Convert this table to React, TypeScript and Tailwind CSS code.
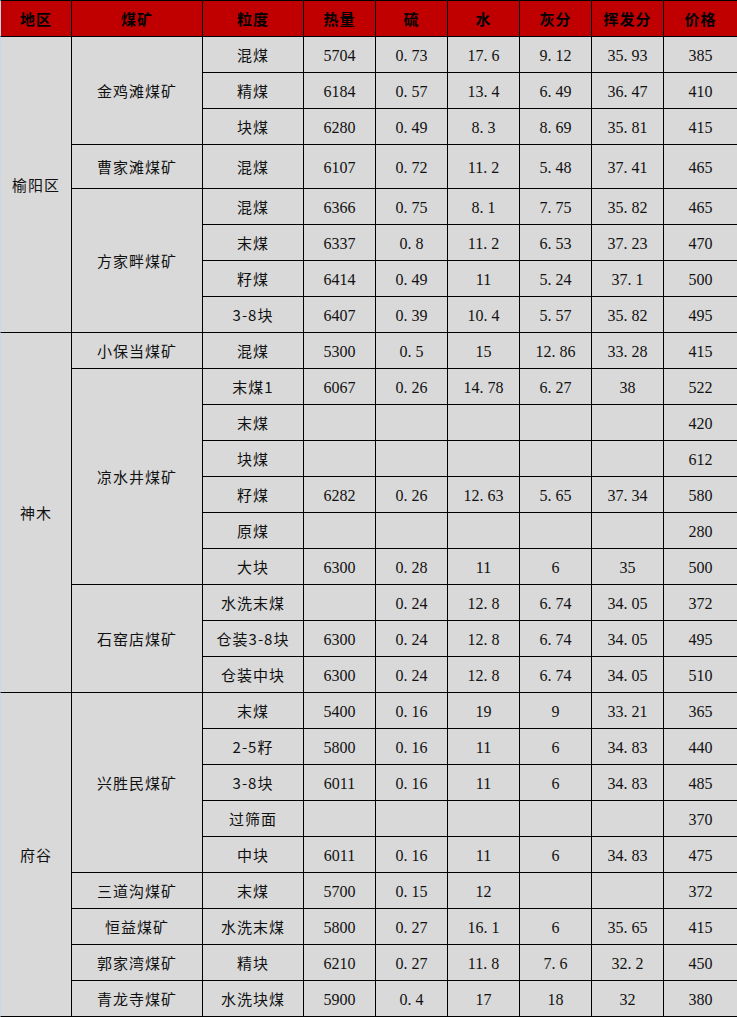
import React from 'react';

type Row = {
  size: string;
  heat?: string;
  s?: string;
  water?: string;
  ash?: string;
  vol?: string;
  price: string;
};

type Mine = { name: string; tall?: boolean; rows: Row[] };
type Region = { name: string; mines: Mine[] };

const DATA: Region[] = [
  {
    name: '榆阳区',
    mines: [
      {
        name: '金鸡滩煤矿',
        rows: [
          { size: '混煤', heat: '5704', s: '0.73', water: '17.6', ash: '9.12', vol: '35.93', price: '385' },
          { size: '精煤', heat: '6184', s: '0.57', water: '13.4', ash: '6.49', vol: '36.47', price: '410' },
          { size: '块煤', heat: '6280', s: '0.49', water: '8.3', ash: '8.69', vol: '35.81', price: '415' },
        ],
      },
      {
        name: '曹家滩煤矿',
        tall: true,
        rows: [{ size: '混煤', heat: '6107', s: '0.72', water: '11.2', ash: '5.48', vol: '37.41', price: '465' }],
      },
      {
        name: '方家畔煤矿',
        rows: [
          { size: '混煤', heat: '6366', s: '0.75', water: '8.1', ash: '7.75', vol: '35.82', price: '465' },
          { size: '末煤', heat: '6337', s: '0.8', water: '11.2', ash: '6.53', vol: '37.23', price: '470' },
          { size: '籽煤', heat: '6414', s: '0.49', water: '11', ash: '5.24', vol: '37.1', price: '500' },
          { size: '3-8块', heat: '6407', s: '0.39', water: '10.4', ash: '5.57', vol: '35.82', price: '495' },
        ],
      },
    ],
  },
  {
    name: '神木',
    mines: [
      {
        name: '小保当煤矿',
        rows: [{ size: '混煤', heat: '5300', s: '0.5', water: '15', ash: '12.86', vol: '33.28', price: '415' }],
      },
      {
        name: '凉水井煤矿',
        rows: [
          { size: '末煤1', heat: '6067', s: '0.26', water: '14.78', ash: '6.27', vol: '38', price: '522' },
          { size: '末煤', price: '420' },
          { size: '块煤', price: '612' },
          { size: '籽煤', heat: '6282', s: '0.26', water: '12.63', ash: '5.65', vol: '37.34', price: '580' },
          { size: '原煤', price: '280' },
          { size: '大块', heat: '6300', s: '0.28', water: '11', ash: '6', vol: '35', price: '500' },
        ],
      },
      {
        name: '石窑店煤矿',
        rows: [
          { size: '水洗末煤', s: '0.24', water: '12.8', ash: '6.74', vol: '34.05', price: '372' },
          { size: '仓装3-8块', heat: '6300', s: '0.24', water: '12.8', ash: '6.74', vol: '34.05', price: '495' },
          { size: '仓装中块', heat: '6300', s: '0.24', water: '12.8', ash: '6.74', vol: '34.05', price: '510' },
        ],
      },
    ],
  },
  {
    name: '府谷',
    mines: [
      {
        name: '兴胜民煤矿',
        rows: [
          { size: '末煤', heat: '5400', s: '0.16', water: '19', ash: '9', vol: '33.21', price: '365' },
          { size: '2-5籽', heat: '5800', s: '0.16', water: '11', ash: '6', vol: '34.83', price: '440' },
          { size: '3-8块', heat: '6011', s: '0.16', water: '11', ash: '6', vol: '34.83', price: '485' },
          { size: '过筛面', price: '370' },
          { size: '中块', heat: '6011', s: '0.16', water: '11', ash: '6', vol: '34.83', price: '475' },
        ],
      },
      {
        name: '三道沟煤矿',
        rows: [{ size: '末煤', heat: '5700', s: '0.15', water: '12', price: '372' }],
      },
      {
        name: '恒益煤矿',
        rows: [{ size: '水洗末煤', heat: '5800', s: '0.27', water: '16.1', ash: '6', vol: '35.65', price: '415' }],
      },
      {
        name: '郭家湾煤矿',
        rows: [{ size: '精块', heat: '6210', s: '0.27', water: '11.8', ash: '7.6', vol: '32.2', price: '450' }],
      },
      {
        name: '青龙寺煤矿',
        rows: [{ size: '水洗块煤', heat: '5900', s: '0.4', water: '17', ash: '18', vol: '32', price: '380' }],
      },
    ],
  },
];

const HEADERS = ['地区', '煤矿', '粒度', '热量', '硫', '水', '灰分', '挥发分', '价格'];
const WIDTHS = ['w-[72px]', 'w-[131px]', 'w-[101px]', 'w-[72px]', 'w-[72px]', 'w-[72px]', 'w-[72px]', 'w-[72px]', 'w-[73px]'];

const cjk = "font-['Noto_Sans_CJK_SC',sans-serif] text-[15px] tracking-[1px] text-[#111111]";
const num = "font-['Liberation_Serif','Noto_Sans_CJK_SC',serif] text-[16px] text-[#111111]";
const cell = 'border-r border-b border-black text-center align-middle p-0 pt-[2px]';

// decimal values are drawn with a wide point, like the source spreadsheet
function Dec({ v }: { v?: string }) {
  if (!v) return null;
  const [a, b] = v.split('.');
  if (b === undefined) return <>{a}</>;
  return (
    <>
      {a}
      <span className="mr-[4px]">.</span>
      {b}
    </>
  );
}

export default function App() {
  return (
    <div className="w-[737px] bg-[#d9d9d9]">
      <table className="table-fixed border-separate border-spacing-0 w-[737px]">
        <colgroup>
          {WIDTHS.map((w, i) => (
            <col key={i} className={w} />
          ))}
        </colgroup>
        <thead>
          <tr className="h-[37px] bg-[#c00000]">
            {HEADERS.map((h, i) => (
              <th
                key={h}
                className={`border-t border-b border-black p-0 pt-[2px] text-center align-middle font-bold font-['Noto_Sans_CJK_SC',sans-serif] text-[15px] tracking-[1px] text-[#000000] ${
                  i === 0 ? 'border-l border-l-[#ccd8ea]' : ''
                } ${i < HEADERS.length - 1 ? 'border-r' : ''}`}
              >
                {h}
              </th>
            ))}
          </tr>
        </thead>
        <tbody>
          {DATA.map((region) => {
            const regionSpan = region.mines.reduce((n, m) => n + m.rows.length, 0);
            return region.mines.map((mine, mi) =>
              mine.rows.map((r, ri) => (
                <tr key={`${region.name}-${mine.name}-${ri}`} className={mine.tall ? 'h-[44px]' : 'h-[36px]'}>
                  {mi === 0 && ri === 0 && (
                    <td rowSpan={regionSpan} className={`${cell} ${cjk} border-l border-l-[#ccd8ea]`}>
                      {region.name}
                    </td>
                  )}
                  {ri === 0 && (
                    <td rowSpan={mine.rows.length} className={`${cell} ${cjk}`}>
                      {mine.name}
                    </td>
                  )}
                  <td className={`${cell} ${cjk}`}>{r.size}</td>
                  <td className={`${cell} ${num}`}>{r.heat}</td>
                  <td className={`${cell} ${num}`}>
                    <Dec v={r.s} />
                  </td>
                  <td className={`${cell} ${num}`}>
                    <Dec v={r.water} />
                  </td>
                  <td className={`${cell} ${num}`}>
                    <Dec v={r.ash} />
                  </td>
                  <td className={`${cell} ${num}`}>
                    <Dec v={r.vol} />
                  </td>
                  <td className={`border-b border-black text-center align-middle p-0 pt-[2px] ${num}`}>{r.price}</td>
                </tr>
              ))
            );
          })}
        </tbody>
      </table>
    </div>
  );
}
